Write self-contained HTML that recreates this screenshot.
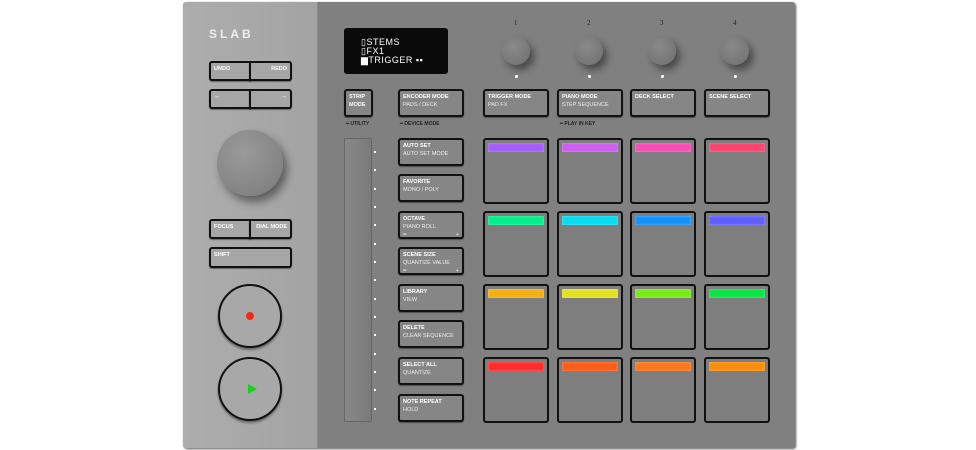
<!DOCTYPE html>
<html><head><style>
*{margin:0;padding:0;box-sizing:border-box}
body{width:976px;height:450px;background:#fff;position:relative;overflow:hidden;font-family:"Liberation Sans",sans-serif}
.a{position:absolute}
.dev{left:183px;top:2px;width:612px;height:446px;background:#808080;border-radius:3px;box-shadow:1px 1px 2px #555}
.lp{left:183px;top:2px;width:135px;height:446px;background:linear-gradient(90deg,#adadad,#a3a3a3);border-radius:3px 0 0 3px;border-right:1px solid #8a8a8a}
.b{position:absolute;border:2px solid #111;border-radius:3px;background:#868686;color:#fff;font-size:5.5px;font-weight:bold;padding:2px 3px;line-height:8px;box-shadow:0 1px 1px rgba(0,0,0,.4)}
.b i{font-style:normal;font-weight:normal;display:block;color:#eee}
.lb{background:#a6a6a6}
.pad{position:absolute;width:66px;height:66px;border:2px solid #111;border-radius:3px;background:#7e7e7e}
.pad u{position:absolute;left:3px;right:3px;top:3px;height:9px;border-radius:1px;filter:saturate(1.1);box-shadow:0 0 2px rgba(255,255,255,.4) inset}
.k{position:absolute;width:28px;height:28px;border-radius:50%;background:radial-gradient(circle at 40% 35%,#8a8a8a,#6e6e6e);box-shadow:4px 5px 8px rgba(0,0,0,.45)}
.dot{position:absolute;width:3px;height:3px;background:#fff;border-radius:50%}
.lbl{position:absolute;color:#222;font-size:5px;font-weight:bold}
.n{position:absolute;font-size:7px;color:#222;font-family:"Liberation Serif",serif}
.rc{position:absolute;width:64px;height:64px;border-radius:50%;border:2px solid #111;background:#a8a8a8;box-shadow:0 2px 2px rgba(0,0,0,.4)}
.sd{position:absolute;left:374px;width:2px;height:2px;background:#fff}
</style></head><body>
<div class="a dev"></div>
<div class="a lp"></div>
<div class="a" style="left:209px;top:27px;font-size:12px;letter-spacing:3px;color:#eee;font-weight:bold">SLAB</div>
<div class="b lb" style="left:209px;top:61px;width:42px;height:20px;border-radius:3px 0 0 3px">UNDO</div>
<div class="b lb" style="left:249px;top:61px;width:43px;height:20px;border-radius:0 3px 3px 0;text-align:right">REDO</div>
<div class="b lb" style="left:209px;top:89px;width:42px;height:20px;border-radius:3px 0 0 3px;font-size:7px">←</div>
<div class="b lb" style="left:249px;top:89px;width:43px;height:20px;border-radius:0 3px 3px 0;text-align:right;font-size:7px">→</div>
<div class="a" style="left:217px;top:130px;width:66px;height:66px;border-radius:50%;background:radial-gradient(circle at 40% 35%,#9a9a9a,#7a7a7a);box-shadow:4px 6px 9px rgba(0,0,0,.45)"></div>
<div class="b lb" style="left:209px;top:219px;width:42px;height:20px;border-radius:3px 0 0 3px">FOCUS</div>
<div class="b lb" style="left:249px;top:219px;width:43px;height:20px;border-radius:0 3px 3px 0;text-align:right">DIAL MODE</div>
<div class="b lb" style="left:209px;top:247px;width:83px;height:21px">SHIFT</div>
<div class="rc" style="left:218px;top:284px"><div class="a" style="left:26px;top:26px;width:8px;height:8px;border-radius:50%;background:#f42a10"></div></div>
<div class="rc" style="left:218px;top:357px"><div class="a" style="left:28px;top:25px;width:0;height:0;border-left:9px solid #18d020;border-top:5px solid transparent;border-bottom:5px solid transparent"></div></div>

<div class="a" style="left:344px;top:28px;width:104px;height:46px;background:#0a0a0a;border-radius:3px;color:#fff;font-family:'Liberation Sans',sans-serif;font-size:9px;line-height:9px;padding:10px 0 0 17px;letter-spacing:.5px">▯STEMS<br>▯FX1<br>▆TRIGGER ▪▪</div>

<div class="b" style="left:344px;top:89px;width:29px;height:28px">STRIP<br>MODE</div>
<div class="lbl" style="left:346px;top:121px">━ UTILITY</div>
<div class="a" style="left:344px;top:138px;width:28px;height:284px;border:1px solid #666;border-radius:2px;background:linear-gradient(90deg,#888,#7a7a7a)"></div>

<div class="b" style="left:398px;top:89px;width:66px;height:28px">ENCODER MODE<i>PADS / DECK</i></div>
<div class="lbl" style="left:400px;top:121px">━ DEVICE MODE</div>
<div class="b" style="left:398px;top:138px;width:66px;height:28px">AUTO SET<i>AUTO SET MODE</i></div>
<div class="b" style="left:398px;top:174px;width:66px;height:28px">FAVORITE<i>MONO / POLY</i></div>
<div class="b" style="left:398px;top:211px;width:66px;height:28px">OCTAVE<i>PIANO ROLL</i><i>━<span style="float:right">+</span></i></div>
<div class="b" style="left:398px;top:247px;width:66px;height:28px">SCENE SIZE<i>QUANTIZE VALUE</i><i>━<span style="float:right">+</span></i></div>
<div class="b" style="left:398px;top:284px;width:66px;height:28px">LIBRARY<i>VIEW</i></div>
<div class="b" style="left:398px;top:320px;width:66px;height:28px">DELETE<i>CLEAR SEQUENCE</i></div>
<div class="b" style="left:398px;top:357px;width:66px;height:28px">SELECT ALL<i>QUANTIZE</i></div>
<div class="b" style="left:398px;top:394px;width:66px;height:28px">NOTE REPEAT<i>HOLD</i></div>

<div class="n" style="left:514px;top:19px">1</div><div class="n" style="left:587px;top:19px">2</div><div class="n" style="left:660px;top:19px">3</div><div class="n" style="left:733px;top:19px">4</div>
<div class="k" style="left:502px;top:37px"></div><div class="k" style="left:575px;top:37px"></div><div class="k" style="left:648px;top:37px"></div><div class="k" style="left:721px;top:37px"></div>
<div class="dot" style="left:515px;top:75px"></div><div class="dot" style="left:588px;top:75px"></div><div class="dot" style="left:661px;top:75px"></div><div class="dot" style="left:734px;top:75px"></div>
<div class="b" style="left:483px;top:89px;width:66px;height:28px">TRIGGER MODE<i>PAD FX</i></div>
<div class="b" style="left:557px;top:89px;width:66px;height:28px">PIANO MODE<i>STEP SEQUENCE</i></div>
<div class="b" style="left:630px;top:89px;width:66px;height:28px">DECK SELECT</div>
<div class="b" style="left:704px;top:89px;width:66px;height:28px">SCENE SELECT</div>
<div class="lbl" style="left:560px;top:121px">━ PLAY IN KEY</div>

<div class="pad" style="left:483px;top:138px"><u style="background:#a060f0"></u></div>
<div class="pad" style="left:557px;top:138px"><u style="background:#c860e8"></u></div>
<div class="pad" style="left:630px;top:138px"><u style="background:#ee50b0"></u></div>
<div class="pad" style="left:704px;top:138px"><u style="background:#f04870"></u></div>
<div class="pad" style="left:483px;top:211px"><u style="background:#18e890"></u></div>
<div class="pad" style="left:557px;top:211px"><u style="background:#18d8e8"></u></div>
<div class="pad" style="left:630px;top:211px"><u style="background:#2090f0"></u></div>
<div class="pad" style="left:704px;top:211px"><u style="background:#6060f0"></u></div>
<div class="pad" style="left:483px;top:284px"><u style="background:#f0b020"></u></div>
<div class="pad" style="left:557px;top:284px"><u style="background:#e0e030"></u></div>
<div class="pad" style="left:630px;top:284px"><u style="background:#80e828"></u></div>
<div class="pad" style="left:704px;top:284px"><u style="background:#18e050"></u></div>
<div class="pad" style="left:483px;top:357px"><u style="background:#f03030"></u></div>
<div class="pad" style="left:557px;top:357px"><u style="background:#f06020"></u></div>
<div class="pad" style="left:630px;top:357px"><u style="background:#f07a28"></u></div>
<div class="pad" style="left:704px;top:357px"><u style="background:#f09018"></u></div>

<div class="sd" style="top:151px"></div><div class="sd" style="top:169px"></div><div class="sd" style="top:188px"></div>
<div class="sd" style="top:206px"></div><div class="sd" style="top:224px"></div><div class="sd" style="top:243px"></div>
<div class="sd" style="top:261px"></div><div class="sd" style="top:279px"></div><div class="sd" style="top:298px"></div>
<div class="sd" style="top:316px"></div><div class="sd" style="top:334px"></div><div class="sd" style="top:353px"></div>
<div class="sd" style="top:371px"></div><div class="sd" style="top:389px"></div><div class="sd" style="top:408px"></div>
</body></html>
